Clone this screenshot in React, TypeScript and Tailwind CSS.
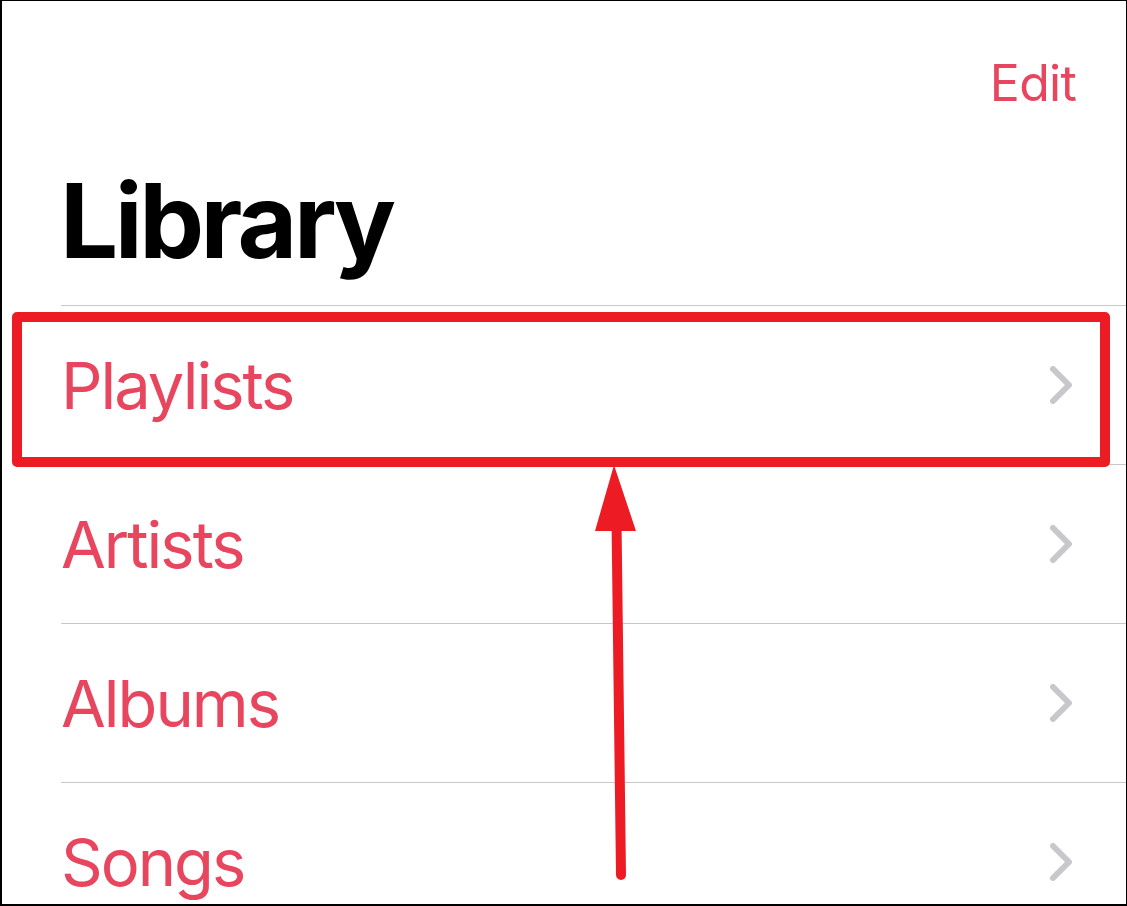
import React from 'react';

const rows = ['Playlists', 'Artists', 'Albums', 'Songs'];

function Chevron() {
  return (
    <svg width="24" height="38" viewBox="0 0 24 38" className="shrink-0">
      <path
        d="M4 3 L20 19 L4 35"
        fill="none"
        stroke="#c7c7cc"
        strokeWidth="6"
        strokeLinecap="round"
        strokeLinejoin="round"
      />
    </svg>
  );
}

export default function App() {
  return (
    <div
      className="relative w-[1127px] h-[906px] overflow-hidden bg-white border-l-2 border-t border-r border-b-2 border-black"
      style={{ fontFamily: 'Inter, "Noto Sans", sans-serif' }}
    >
      {/* header */}
      <div className="flex justify-end pr-[50px] pt-[57px]">
        <span className="text-[50px] leading-none text-[#e8455e] tracking-[-0.75px]">Edit</span>
      </div>
      <h1 className="mt-[61px] pl-[58px] text-[103px] leading-none font-bold text-black tracking-[-3.5px]">
        Library
      </h1>

      {/* list */}
      <div className="mt-[33px] ml-[59px] border-t border-[#c8c7cc]">
        {rows.map((r) => (
          <div
            key={r}
            className="flex items-center justify-between h-[159px] border-b border-[#c8c7cc] pr-[53px]"
          >
            <span className="text-[65px] leading-none text-[#e8455e] tracking-[-2px]">{r}</span>
            <Chevron />
          </div>
        ))}
      </div>

      {/* annotation */}
      <div className="absolute left-[10px] top-[311px] w-[1098px] h-[155px] border-[10px] border-[#ed1c24] rounded-[5px]" />
      <svg className="absolute left-0 top-0" width="1127" height="906" viewBox="0 0 1127 906">
        <line x1="619" y1="874" x2="614.5" y2="520" stroke="#ed1c24" strokeWidth="10" strokeLinecap="round" />
        <polygon points="612,464 593,530 634,530" fill="#ed1c24" />
      </svg>
    </div>
  );
}
